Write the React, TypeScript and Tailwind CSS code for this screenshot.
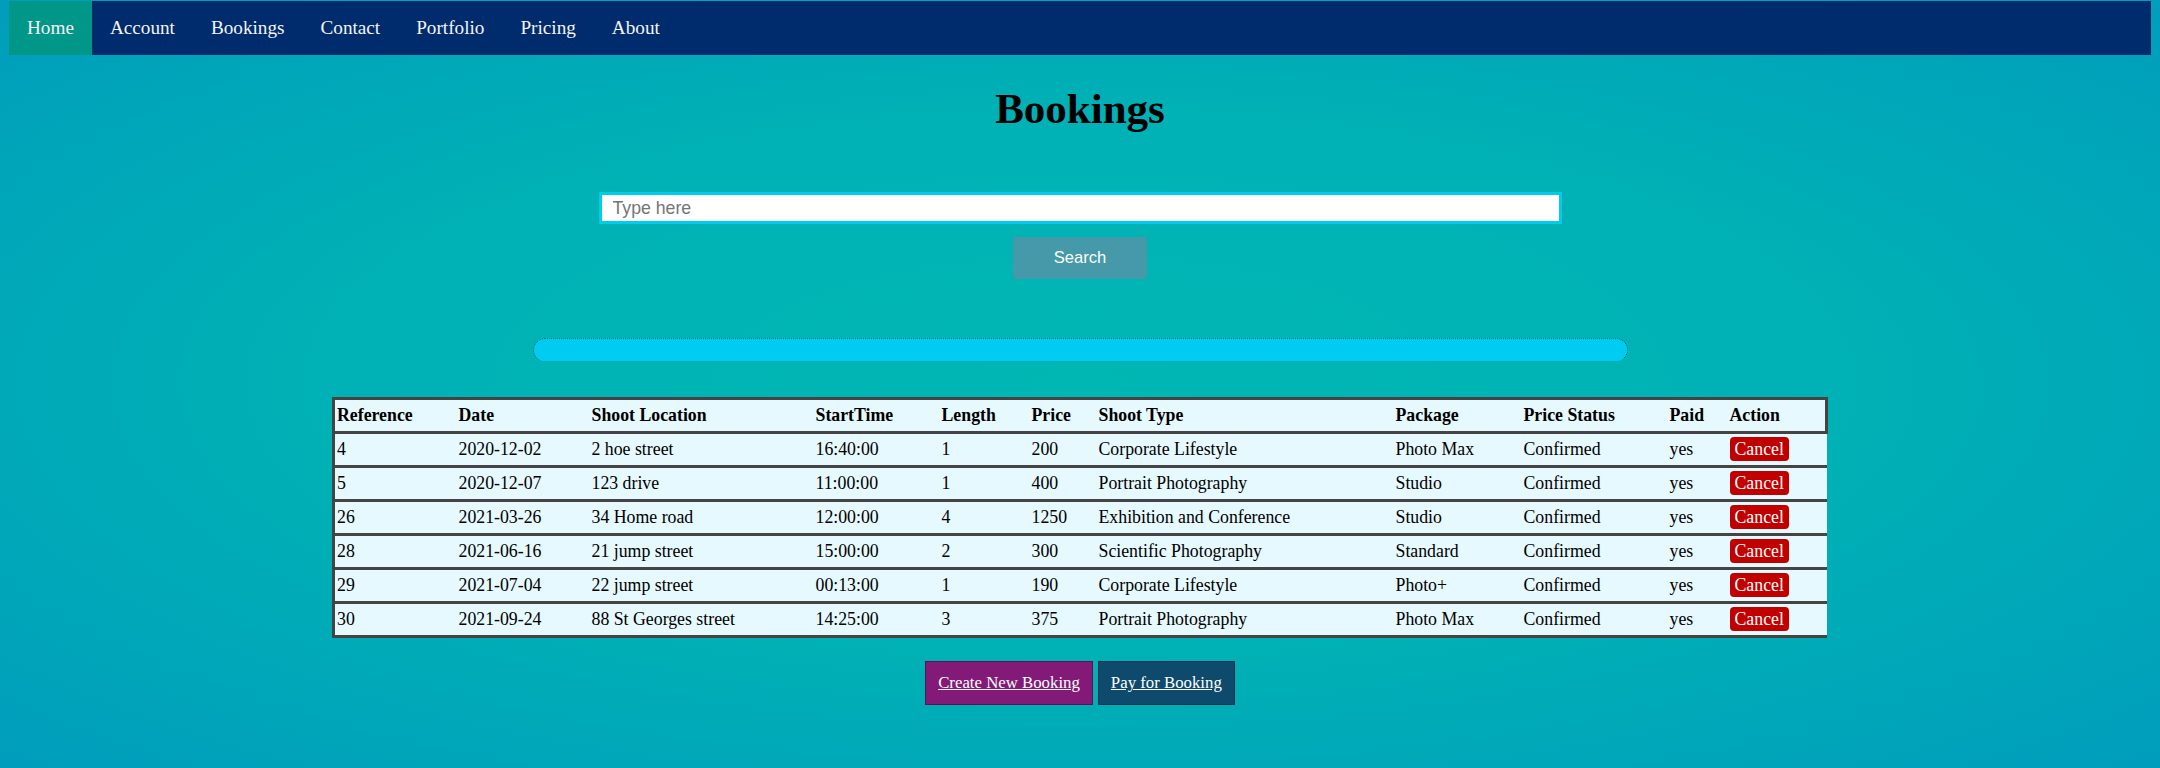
import { useState } from "react"

const navLinks = ["Home", "Account", "Bookings", "Contact", "Portfolio", "Pricing", "About"]

const columns = [
  { label: "Reference", width: "w-[123px]" },
  { label: "Date", width: "w-[133px]" },
  { label: "Shoot Location", width: "w-[224px]" },
  { label: "StartTime", width: "w-[126px]" },
  { label: "Length", width: "w-[90px]" },
  { label: "Price", width: "w-[67px]" },
  { label: "Shoot Type", width: "w-[297px]" },
  { label: "Package", width: "w-[128px]" },
  { label: "Price Status", width: "w-[146px]" },
  { label: "Paid", width: "w-[60px]" },
  { label: "Action", width: "w-[99px]" },
]

const bookings = [
  { ref: 4, date: "2020-12-02", location: "2 hoe street", start: "16:40:00", length: 1, price: 200, type: "Corporate Lifestyle", pkg: "Photo Max" },
  { ref: 5, date: "2020-12-07", location: "123 drive", start: "11:00:00", length: 1, price: 400, type: "Portrait Photography", pkg: "Studio" },
  { ref: 26, date: "2021-03-26", location: "34 Home road", start: "12:00:00", length: 4, price: 1250, type: "Exhibition and Conference", pkg: "Studio" },
  { ref: 28, date: "2021-06-16", location: "21 jump street", start: "15:00:00", length: 2, price: 300, type: "Scientific Photography", pkg: "Standard" },
  { ref: 29, date: "2021-07-04", location: "22 jump street", start: "00:13:00", length: 1, price: 190, type: "Corporate Lifestyle", pkg: "Photo+" },
  { ref: 30, date: "2021-09-24", location: "88 St Georges street", start: "14:25:00", length: 3, price: 375, type: "Portrait Photography", pkg: "Photo Max" },
]

export default function App() {
  const [query, setQuery] = useState("")

  return (
    <div className="min-h-screen bg-[radial-gradient(ellipse_at_center,#00b7b4_0%,#00b1b5_50%,#009dbc_100%)] pt-px pb-10 font-['Liberation_Serif','Times_New_Roman',serif] text-black">
      {/* top navigation */}
      <nav className="mx-[9px] flex h-[54px] bg-[#002b6c]">
        {navLinks.map((link) => (
          <a
            key={link}
            href="#"
            className={`${link === "Home" ? "bg-[#009688]" : ""} flex items-center px-[18px] text-[19.2px] text-[#f4f4f4]`}
          >
            {link}
          </a>
        ))}
      </nav>

      <h1 className="mt-[30px] text-center text-[43px] font-bold leading-[48px]">Bookings</h1>

      <div className="mt-[59px] flex flex-col items-center">
        <input
          type="text"
          placeholder="Type here"
          value={query}
          onChange={(e) => setQuery(e.target.value)}
          className="h-[32px] w-[963px] border-[3px] border-[#00ccee] bg-white px-[11px] font-['Liberation_Sans',Arial,sans-serif] text-[17.7px] text-black outline-none placeholder:text-[#757575]"
        />
        <button className="mt-[13px] h-[42px] w-[134px] rounded-[2px] bg-[#4599a8] font-['Liberation_Sans',Arial,sans-serif] text-[16.6px] text-white">
          Search
        </button>

        {/* status bar */}
        <div className="mt-[59px] h-[24px] w-[1095px] rounded-full border border-dotted border-[#0b5a3c] border-b-solid border-b-[#0a8d80] bg-[#00cbf1]"></div>
      </div>

      <table className="mx-auto mt-[35px] w-[1495px] table-fixed border-collapse border-y-[3px] border-l-[3px] border-[#444] text-[17.8px]">
        <colgroup>
          {columns.map((c) => (
            <col key={c.label} className={c.width} />
          ))}
        </colgroup>
        <thead>
          <tr className="border-[3px] border-[#444] bg-[#e6f9fe]">
            {columns.map((c) => (
              <th key={c.label} className="h-[34px] px-[2px] text-left font-bold">
                {c.label}
              </th>
            ))}
          </tr>
        </thead>
        <tbody>
          {bookings.map((b) => (
            <tr key={b.ref} className="border-b-[3px] border-[#444] bg-[#e6f9fe]">
              <td className="h-[34px] px-[2px]">{b.ref}</td>
              <td className="px-[2px]">{b.date}</td>
              <td className="px-[2px]">{b.location}</td>
              <td className="px-[2px]">{b.start}</td>
              <td className="px-[2px]">{b.length}</td>
              <td className="px-[2px]">{b.price}</td>
              <td className="px-[2px]">{b.type}</td>
              <td className="px-[2px]">{b.pkg}</td>
              <td className="px-[2px]">Confirmed</td>
              <td className="px-[2px]">yes</td>
              <td className="px-[2px]">
                <button className="h-[24px] rounded-[4px] bg-[#c10000] px-[5px] leading-[24px] text-white">Cancel</button>
              </td>
            </tr>
          ))}
        </tbody>
      </table>

      <div className="mt-[23px] flex justify-center gap-[5px]">
        <a
          href="#"
          className="flex h-[44px] items-center border border-[#5e1057] bg-[#831a78] px-[12px] text-[16.8px] text-white underline"
        >
          Create New Booking
        </a>
        <a
          href="#"
          className="flex h-[44px] items-center border border-[#08334d] bg-[#0d4a6c] px-[12px] text-[16.8px] text-white underline"
        >
          Pay for Booking
        </a>
      </div>
    </div>
  )
}
